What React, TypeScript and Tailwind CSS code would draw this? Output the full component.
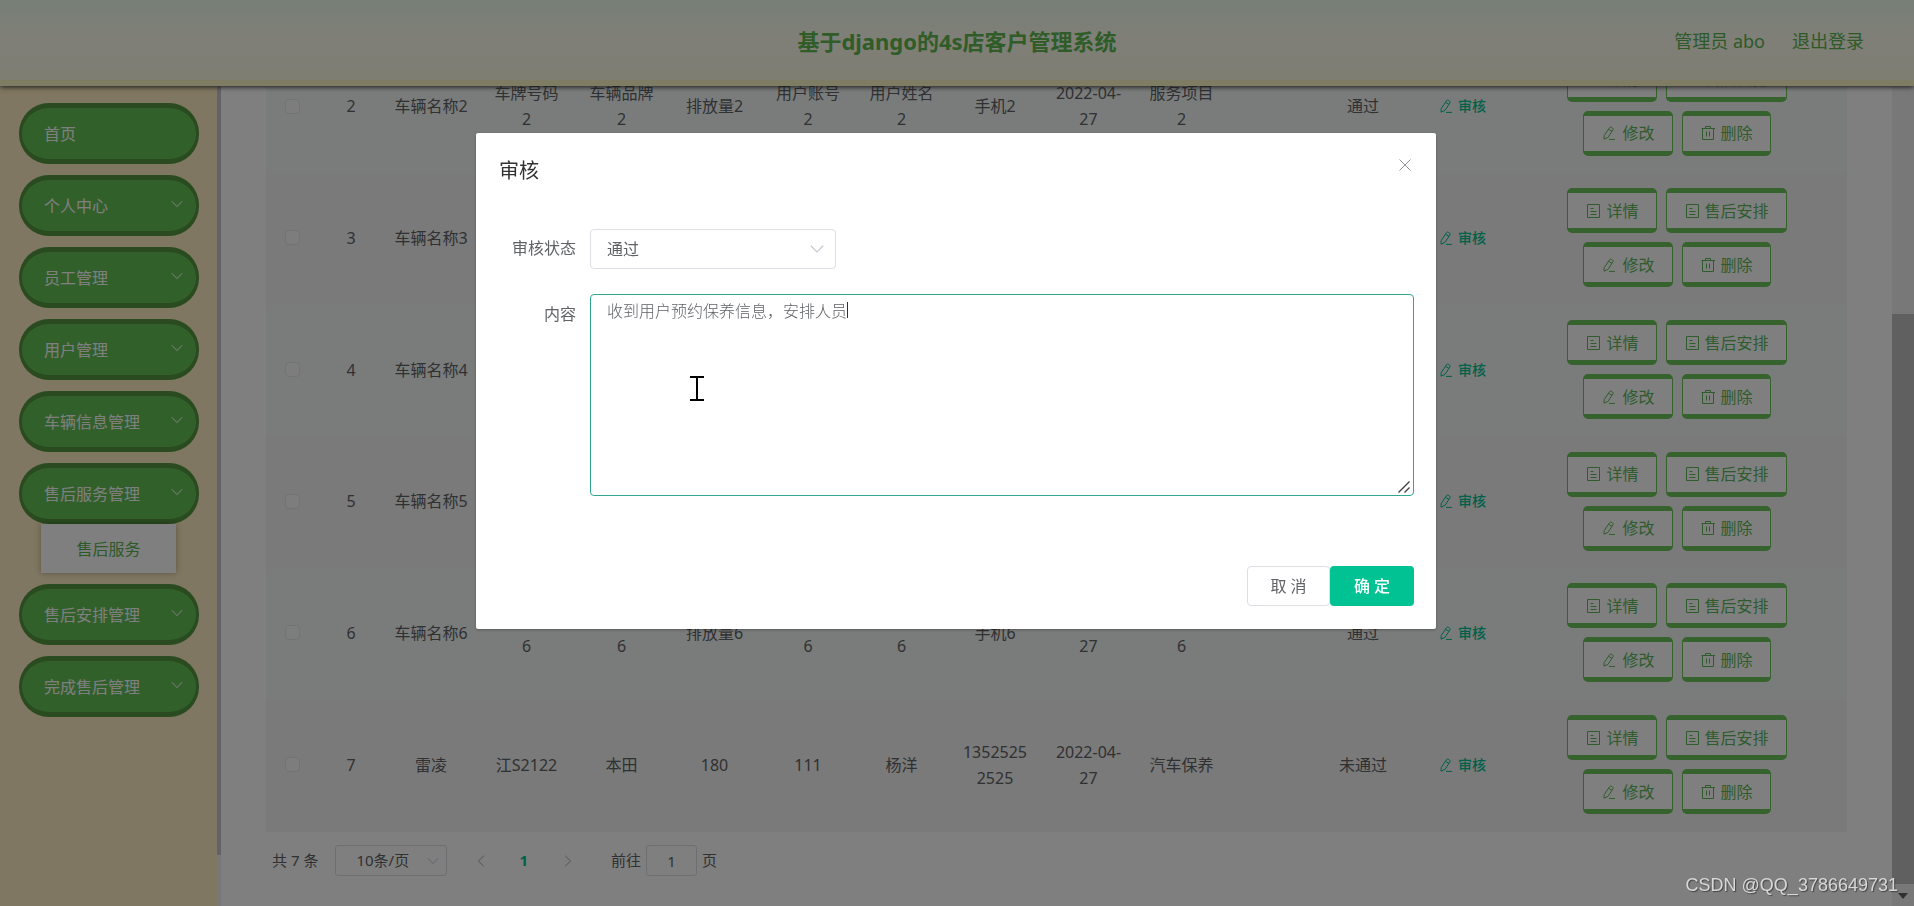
import { ReactNode } from "react";

interface Service {
  id: number;
  name: string;
  plate: string;
  brand: string;
  displacement: string;
  account: string;
  username: string;
  phone: string;
  date: string;
  project: string;
  reply: string;
  status: string;
}

const menus = [
  { title: "首页", children: [], arrow: false },
  { title: "个人中心", children: [], arrow: true },
  { title: "员工管理", children: [], arrow: true },
  { title: "用户管理", children: [], arrow: true },
  { title: "车辆信息管理", children: [], arrow: true },
  { title: "售后服务管理", children: ["售后服务"], arrow: true },
  { title: "售后安排管理", children: [], arrow: true },
  { title: "完成售后管理", children: [], arrow: true },
];

const services: Service[] = [2, 3, 4, 5, 6].map((n) => ({
  id: n,
  name: `车辆名称${n}`,
  plate: `车牌号码${n}`,
  brand: `车辆品牌${n}`,
  displacement: `排放量${n}`,
  account: `用户账号${n}`,
  username: `用户姓名${n}`,
  phone: `手机${n}`,
  date: "2022-04-27",
  project: `服务项目${n}`,
  reply: "",
  status: "通过",
}));

services.push({
  id: 7,
  name: "雷凌",
  plate: "江S2122",
  brand: "本田",
  displacement: "180",
  account: "111",
  username: "杨洋",
  phone: "13525252525",
  date: "2022-04-27",
  project: "汽车保养",
  reply: "",
  status: "未通过",
});

function ChevronDown({ className }: { className: string }) {
  return (
    <svg className={className} viewBox="0 0 12 12" fill="none" stroke="currentColor" aria-hidden="true">
      <path d="M0.8 3.2L6 8.6L11.2 3.2" />
    </svg>
  );
}

function EditIcon() {
  return (
    <svg className="w-4 h-4" viewBox="0 0 16 16" fill="none" stroke="currentColor" strokeLinejoin="round" aria-hidden="true">
      <path d="M8.6 2.6Q9.2 1.6 10.2 2.2L11.6 3.1Q12.6 3.7 12 4.7L7 12.4L3 14.2L3.2 10.6Z" />
      <path d="M7.6 4.4L11 6.4" />
      <path d="M8 14.4H14" />
    </svg>
  );
}

function TicketIcon() {
  return (
    <svg className="w-4 h-4" viewBox="0 0 16 16" fill="none" stroke="currentColor" aria-hidden="true">
      <path d="M2.5 1.5H14.5V14.5H2.5Z" />
      <path d="M5.5 5.5H8.5M5.5 8.5H11.5M5.5 11.5H11.5" />
    </svg>
  );
}

function DeleteIcon() {
  return (
    <svg className="w-4 h-4" viewBox="0 0 16 16" fill="none" stroke="currentColor" aria-hidden="true">
      <path d="M1.5 3.5H15" />
      <path d="M5.5 3.5V1.5H10.5V3.5" />
      <path d="M2.5 3.5V14.5H13.5V3.5" />
      <path d="M6.5 6.5V11.5M9.5 6.5V11.5" />
    </svg>
  );
}

function ActionButton({ icon, children }: { icon: ReactNode; children: ReactNode }) {
  return (
    <button
      type="button"
      className="h-[45px] px-[17px] flex items-center gap-[5px] bg-white border-x border-y-[5px] border-[#6cc65a] rounded-[5px] text-[#60b85a] text-base leading-none whitespace-nowrap"
    >
      {icon}
      {children}
    </button>
  );
}

function Sidebar() {
  return (
    <aside className="w-[217px] shrink-0 bg-[#ffeec2] pt-[17px] pl-[19px] pr-[18px]">
      <nav className="flex flex-col gap-[11px]">
        {menus.map((menu) => (
          <div key={menu.title}>
            <button
              type="button"
              className="w-full h-[61px] pl-[22px] pr-[13px] flex items-center justify-between rounded-[30px] bg-[#64c056] border-x-[3px] border-y-[5px] border-[#549440] text-base text-white"
            >
              {menu.title}
              {menu.arrow && <ChevronDown className="w-3 h-3 mb-[3px]" />}
            </button>
            {menu.children.map((child) => (
              <a
                key={child}
                href="#"
                className="ml-[22px] mr-[23px] h-[49px] flex items-center justify-center bg-white text-base text-[#5cb455] shadow-[0_0_6px_rgba(0,0,0,0.3)]"
              >
                {child}
              </a>
            ))}
          </div>
        ))}
      </nav>
    </aside>
  );
}

function ServiceTable() {
  return (
    <table className="w-full h-[790px] shrink-0 table-fixed border-collapse text-base leading-[26px] text-center text-[#606266]">
      <colgroup>
        <col className="w-[52px]" />
        <col className="w-[66px]" />
        <col className="w-[94px]" />
        <col className="w-[97px]" />
        <col className="w-[93px]" />
        <col className="w-[93px]" />
        <col className="w-[94px]" />
        <col className="w-[93px]" />
        <col className="w-[94px]" />
        <col className="w-[93px]" />
        <col className="w-[93px]" />
        <col className="w-[88px]" />
        <col className="w-[94px]" />
        <col className="w-[97px]" />
        <col />
      </colgroup>
      <tbody>
        {services.map((row) => (
          <tr key={row.id} className="bg-[#f5f5f5] odd:bg-[#f5f9f8] *:pb-[3px]">
            <td>
              <input
                type="checkbox"
                aria-label={`选择第${row.id}条`}
                className="appearance-none block mx-auto w-[15px] h-[15px] rounded-sm border border-[#e4e6ea] bg-[#fafafa]"
              />
            </td>
            <td>{row.id}</td>
            <td className="whitespace-nowrap">{row.name}</td>
            {[row.plate, row.brand, row.displacement, row.account, row.username, row.phone, row.date, row.project, row.reply, row.status].map(
              (text, idx) => (
                <td key={idx} className="px-[13px] break-all">
                  {text}
                </td>
              )
            )}
            <td>
              <button type="button" className="ml-7 flex items-center gap-1 text-sm font-medium leading-none text-[#00c292]">
                <EditIcon />
                审核
              </button>
            </td>
            <td>
              <div className="flex flex-col gap-[9px]">
                <div className="flex justify-center gap-[9px]">
                  <ActionButton icon={<TicketIcon />}>详情</ActionButton>
                  <ActionButton icon={<TicketIcon />}>售后安排</ActionButton>
                </div>
                <div className="flex justify-center gap-[9px]">
                  <ActionButton icon={<EditIcon />}>修改</ActionButton>
                  <ActionButton icon={<DeleteIcon />}>删除</ActionButton>
                </div>
              </div>
            </td>
          </tr>
        ))}
      </tbody>
    </table>
  );
}

function Pagination() {
  return (
    <div className="mt-[13px] mb-[30px] pl-[6px] flex items-center text-[15px] text-[#606266] shrink-0">
      <span>共 7 条</span>
      <div className="relative ml-[17px]">
        <select
          aria-label="每页条数"
          className="appearance-none w-[112px] h-[31px] pl-5 rounded-[3px] border border-[#dcdfe6] bg-white"
        >
          <option>10条/页</option>
        </select>
        <ChevronDown className="absolute right-2 top-[10px] w-3 h-3 text-[#c0c4cc] pointer-events-none" />
      </div>
      <button type="button" aria-label="上一页" className="ml-7 text-[#a0a4ac]">
        <ChevronDown className="w-3 h-3 rotate-90" />
      </button>
      <button type="button" className="ml-8 mr-[34px] font-bold text-[#00c292]">
        1
      </button>
      <button type="button" aria-label="下一页" className="text-[#a0a4ac]">
        <ChevronDown className="w-3 h-3 -rotate-90" />
      </button>
      <label htmlFor="page" className="ml-[37px]">
        前往
      </label>
      <input
        id="page"
        defaultValue="1"
        className="mx-[5px] w-[51px] h-[31px] rounded-[3px] border border-[#dcdfe6] bg-white text-center"
      />
      <span>页</span>
    </div>
  );
}

function ReviewDialog() {
  return (
    <div className="fixed inset-0 z-20 bg-black/50 flex justify-center items-start pt-[133px] pr-[2px]">
      <div
        role="dialog"
        aria-label="审核"
        className="w-[960px] max-w-full rounded-xs bg-white shadow-[0_1px_3px_rgba(0,0,0,0.3)] text-[#606266]"
      >
        <div className="pt-[22px] pl-[23px] pr-[21px] flex items-start justify-between">
          <h2 className="mt-[3px] text-xl leading-[26px] text-[#303133]">审核</h2>
          <button type="button" aria-label="关闭" className="p-[2px] text-[#909399]">
            <svg className="w-4 h-4" viewBox="0 0 16 16" fill="none" stroke="currentColor" aria-hidden="true">
              <path d="M2.5 2.5L13.5 13.5M13.5 2.5L2.5 13.5" />
            </svg>
          </button>
        </div>

        <form className="mt-[45px] pl-9 pr-[22px] text-base">
          <div className="flex">
            <label htmlFor="status" className="w-16 shrink-0 text-right leading-[38px]">
              审核状态
            </label>
            <div className="relative ml-[14px]">
              <select
                id="status"
                className="appearance-none w-[246px] h-10 pl-4 rounded-[4px] border border-[#dcdfe6] bg-white"
              >
                <option>通过</option>
                <option>未通过</option>
              </select>
              <ChevronDown className="absolute right-3 top-[13px] w-[14px] h-[14px] text-[#c0c4cc] pointer-events-none" />
            </div>
          </div>
          <div className="mt-[25px] flex">
            <label htmlFor="content" className="w-16 shrink-0 text-right leading-10">
              内容
            </label>
            <div className="relative ml-[14px] flex-1">
              <textarea
                id="content"
                defaultValue="收到用户预约保养信息，安排人员"
                className="block w-full h-[202px] px-4 py-1 leading-6 font-light rounded-[4px] border border-[#30a890] outline-none resize-none"
              />
              {/* resize grip */}
              <svg className="absolute right-1 bottom-[3px] w-3 h-3" viewBox="0 0 12 12" stroke="#404040" strokeWidth="1.4" aria-hidden="true">
                <path d="M0.5 11.5L11.5 0.5M6.5 11.5L11.5 6.5" />
              </svg>
              {/* text caret and mouse pointer */}
              <span className="absolute left-[257px] top-2 w-px h-4 bg-[#303133]" />
              <svg className="absolute left-[100px] top-[82px] w-[14px] h-[25px]" viewBox="0 0 14 25" fill="none" stroke="#000" strokeWidth="2" aria-hidden="true">
                <path d="M0 1H14M0 24H14M7 1V24" />
              </svg>
            </div>
          </div>
        </form>

        <div className="mt-[70px] pb-[23px] pr-[22px] flex justify-end text-base">
          <button type="button" className="w-[83px] h-10 rounded-[4px] border border-[#dcdfe6] bg-white">
            取 消
          </button>
          <button type="button" className="w-[84px] h-10 rounded-[4px] bg-[#00c292] text-white font-medium">
            确 定
          </button>
        </div>
      </div>
    </div>
  );
}

export default function App() {
  return (
    <div className="h-screen flex flex-col overflow-hidden bg-white font-['Noto_Sans','Noto_Sans_CJK_SC',sans-serif]">
      {/* Header */}
      <header className="relative z-10 h-[86px] shrink-0 grid grid-cols-[1fr_auto_1fr] items-center pt-[2px] pr-[50px] border-b-[6px] border-[#fff8c8] bg-linear-to-b from-[#eeffee] via-[#fffef0] to-[#fcfce4] shadow-[0_1px_5px_#333] text-[#5cb450]">
        <span />
        <h1 className="text-[22px] font-bold text-[#60b850] pl-[50px]">基于django的4s店客户管理系统</h1>
        <div className="flex justify-end gap-[27px] text-lg">
          <span>管理员 abo</span>
          <a href="#">退出登录</a>
        </div>
      </header>

      <div className="flex-1 min-h-0 flex">
        <Sidebar />
        <div className="w-1 shrink-0 bg-[#f0f0f4] pb-[51px]">
          <div className="h-full bg-[#c8c4cc]" />
        </div>
        <main className="flex-1 min-w-0 px-[45px] flex flex-col justify-end overflow-hidden">
          <ServiceTable />
          <Pagination />
        </main>
        {/* page scrollbar */}
        <div className="w-[22px] shrink-0 flex flex-col bg-[#f1f1f1]">
          <div className="flex-2" />
          <div className="flex-5 bg-[#c1c1c1]" />
          <svg className="w-[22px] h-[22px]" viewBox="0 0 22 22" aria-hidden="true">
            <path d="M6 9H16L11 15Z" fill="#606060" />
          </svg>
        </div>
      </div>

      <ReviewDialog />
      <p className="fixed z-30 right-4 bottom-2 text-lg leading-[26px] font-['Liberation_Sans',sans-serif] text-[#d8d8d8] [text-shadow:1px_1px_1px_#444]">
        CSDN @QQ_3786649731
      </p>
    </div>
  );
}
